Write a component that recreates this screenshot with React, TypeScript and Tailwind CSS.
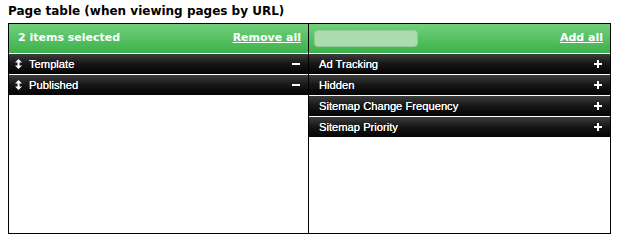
import { Fragment } from "react";

const selected = ["Template", "Published"];
const available = ["Ad Tracking", "Hidden", "Sitemap Change Frequency", "Sitemap Priority"];

function DragIcon() {
  return (
    <svg width="7" height="10" viewBox="0 0 7 10" className="shrink-0">
      <path d="M3.5 0 L7 3.5 L0 3.5 Z M3.5 10 L7 6.5 L0 6.5 Z" fill="white" />
      <rect x="2.5" y="3" width="2" height="4" fill="white" />
    </svg>
  );
}

function Row({ label, sign, drag }: { label: string; sign: "+" | "-"; drag?: boolean }) {
  return (
    <div
      className={`mt-px h-5 flex items-center ${drag ? "pl-[6px]" : "pl-[10px]"} pr-[8px] bg-gradient-to-b from-[#3d3d3d] via-[#161616] to-[#050505] text-white text-[11.2px]`}
      style={{ fontFamily: '"Liberation Sans", Arial, sans-serif' }}
    >
      {drag && (
        <span className="mr-[7px] flex items-center">
          <DragIcon />
        </span>
      )}
      <span className="flex-1 [text-shadow:0_0_0.4px_white]">{label}</span>
      {sign === "-" ? (
        <span className="w-[8px] h-[2px] bg-white" />
      ) : (
        <svg width="8" height="8" viewBox="0 0 8 8">
          <rect x="3" y="0" width="2" height="8" fill="white" />
          <rect x="0" y="3" width="8" height="2" fill="white" />
        </svg>
      )}
    </div>
  );
}

export default function App() {
  return (
    <div className="p-2 pt-[4px] bg-white" style={{ fontFamily: '"DejaVu Sans", Verdana, sans-serif' }}>
      <h2 className="text-[12px] font-bold text-black leading-[15px] mb-[4px]">
        Page table (when viewing pages by URL)
      </h2>
      <div className="w-[603px] h-[211px] border border-black grid grid-cols-[300px_301px]">
        <div className="border-r border-black flex flex-col">
          <div className="h-[29px] flex items-center justify-between pl-[9px] pr-[7px] bg-gradient-to-b from-[#70d07c] to-[#3bb14a] text-white text-[11px] font-bold">
            <span>2 items selected</span>
            <span className="underline">Remove all</span>
          </div>
          {selected.map((s) => (
            <Fragment key={s}>
              <Row label={s} sign="-" drag />
            </Fragment>
          ))}
        </div>
        <div className="flex flex-col">
          <div className="h-[29px] flex items-center justify-between pl-[5px] pr-[7px] bg-gradient-to-b from-[#70d07c] to-[#3bb14a] text-white text-[11px] font-bold">
            <input
              className="w-[104px] h-[17px] rounded-[4px] bg-[#abdcb0] border border-[#8fcf96] outline-none"
              aria-label="Filter"
            />
            <span className="underline">Add all</span>
          </div>
          {available.map((s) => (
            <Row key={s} label={s} sign="+" />
          ))}
        </div>
      </div>
    </div>
  );
}
